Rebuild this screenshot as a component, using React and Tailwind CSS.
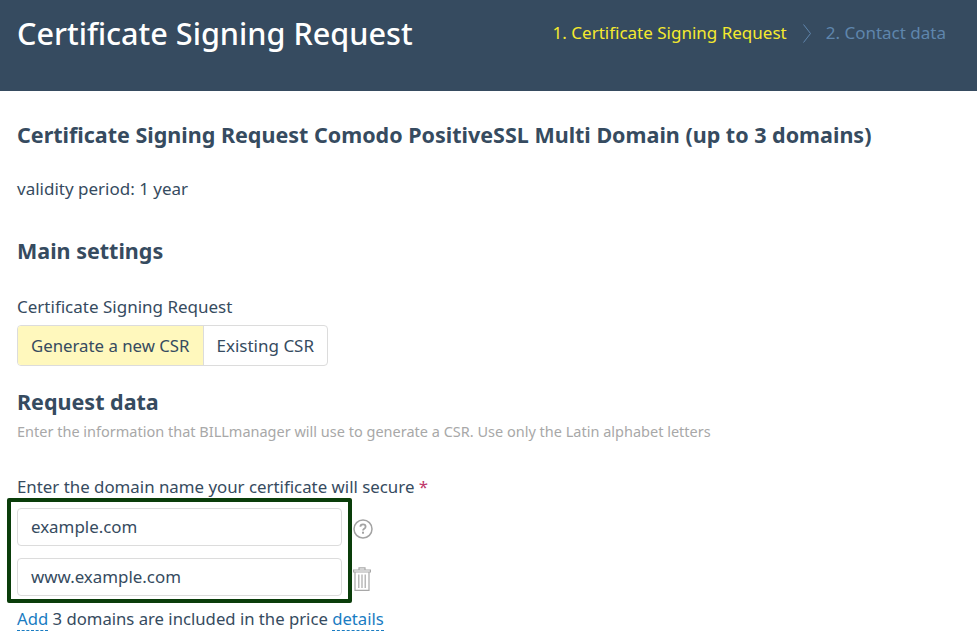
function HelpIcon() {
  return (
    <svg className="block" width="20" height="20" viewBox="0 0 20 20" fill="none">
      <circle cx="10" cy="10" r="9" stroke="#a3a3a3" strokeWidth="1.5" />
      <path d="M7.4 7.8c0-1.5 1.1-2.4 2.6-2.4s2.6.9 2.6 2.3c0 1.1-.7 1.6-1.4 2.1-.7.5-1.2 1-1.2 1.8" stroke="#a3a3a3" strokeWidth="1.8" />
      <rect x="9" y="12.7" width="2" height="2" fill="#a3a3a3" />
    </svg>
  )
}

function TrashIcon() {
  return (
    <svg className="block" width="18" height="24" viewBox="0 0 18 24" fill="none" stroke="#a8a8a8" strokeWidth="1.2">
      <path d="M6 3V.8h6V3" />
      <path d="M.6 3h16.8v2H.6z" />
      <path d="M2 5v18.4h14V5" />
      <path d="M5.8 7.5v13.5M9 7.5v13.5M12.2 7.5v13.5" />
    </svg>
  )
}

export default function App() {
  return (
    <div className="w-[977px] h-[640px] overflow-hidden bg-white text-[#364b60] [font-family:'Noto_Sans',sans-serif]">
      <header className="h-[91px] bg-[#364b60] flex justify-between pl-[17px] pr-[31px]">
        <h1 className="text-[30.6px] leading-[40px] mt-[13px] font-medium text-white">Certificate Signing Request</h1>
        <div className="flex items-center h-[24px] mt-[21px] text-[17px]">
          <span className="text-[#f5ea2e]">1. Certificate Signing Request</span>
          <svg className="ml-[16px] mr-[15px]" width="8" height="19" viewBox="0 0 8 19" fill="none">
            <path d="M.5.5l7 9-7 9" stroke="#5f86ad" strokeWidth="1" />
          </svg>
          <span className="text-[#5f86ad]">2. Contact data</span>
        </div>
      </header>

      <main className="px-[17px]">
        <h2 className="text-[21.5px] leading-[28px] mt-[30px] font-bold whitespace-nowrap">Certificate Signing Request Comodo PositiveSSL Multi Domain (up to 3 domains)</h2>
        <p className="text-[17px] leading-[24px] mt-[28px]">validity period: 1 year</p>
        <h2 className="text-[21.5px] leading-[28px] mt-[36px] font-bold">Main settings</h2>

        <p className="text-[17px] leading-[24px] mt-[30px]">Certificate Signing Request</p>
        <div className="flex w-fit mt-[6px] h-[41px] border border-[#dcdcdc] rounded-[4px] text-[16.8px] overflow-hidden">
          <span className="flex items-center px-[13px] bg-[#fff8bd] border-r border-[#dcdcdc]">Generate a new CSR</span>
          <span className="flex items-center px-[13px] text-[17px]">Existing CSR</span>
        </div>

        <h2 className="text-[21.5px] leading-[28px] mt-[22px] font-bold">Request data</h2>
        <p className="text-[14.5px] leading-[20px] mt-[5px] text-[#a8a8a8]">Enter the information that BILLmanager will use to generate a CSR. Use only the Latin alphabet letters</p>

        <p className="text-[16.85px] leading-[24px] mt-[34px]">
          Enter the domain name your certificate will secure <span className="text-[#c0396b]">*</span>
        </p>

        <div className="relative w-fit mt-[9px] flex flex-col gap-[12px]">
          <div className="flex items-center">
            <div className="w-[325px] h-[38px] flex items-center px-[13px] border border-[#dcdcdc] rounded-[4px] text-[16.9px]">example.com</div>
            <span className="ml-[11px] mt-[4px]"><HelpIcon /></span>
          </div>
          <div className="flex items-center">
            <div className="w-[325px] h-[38px] flex items-center px-[13px] border border-[#dcdcdc] rounded-[4px] text-[16.9px]">www.example.com</div>
            <span className="ml-[11px] mt-[3px]"><TrashIcon /></span>
          </div>
          {/* green highlight drawn over the fields */}
          <div className="absolute left-[-10px] top-[-10px] w-[345px] h-[105px] border-[4px] border-[#0a3d0a] rounded-[2px] pointer-events-none" />
        </div>

        <p className="text-[16.7px] leading-[24px] mt-[11px]">
          <span className="text-[#1a7cc2] border-b border-dashed border-[#1a7cc2]">Add</span> 3 domains are included in the price{' '}
          <span className="text-[#1a7cc2] border-b border-dashed border-[#1a7cc2]">details</span>
        </p>
      </main>
    </div>
  )
}
